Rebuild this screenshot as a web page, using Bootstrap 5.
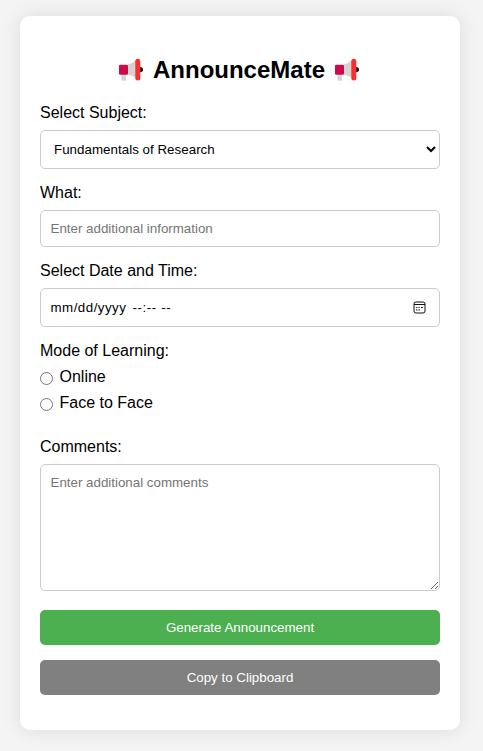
<!DOCTYPE html>
<html lang="en">
<head>
<meta charset="utf-8">
<meta name="viewport" content="width=device-width, initial-scale=1">
<title>AnnounceMate</title>
<link rel="stylesheet" href="https://cdn.jsdelivr.net/npm/bootstrap@5.3.0/dist/css/bootstrap.min.css">
<style>
body{min-height:100vh;padding:16px 0 0 20px;background:#f4f4f4;color:#000;font-family:"Liberation Sans",Arial,sans-serif;font-size:16px;line-height:18px}
.panel{width:440px;height:714px;padding:40px 20px 35px;border-radius:10px;box-shadow:0 0 20px rgba(0,0,0,.1)}
.title{font-size:24px;line-height:28px;height:28px;margin-bottom:20px;padding-right:2px;gap:10px}
.caption{display:block;height:18px;margin-bottom:8px}
.field{display:block;width:100%;height:39px;margin-bottom:15px;padding:0 10px 0 9.500px;border:1px solid #ccc;border-radius:5px;background:#fff;color:#000;font-size:13.333px;line-height:normal}
.field::placeholder{color:#757575}
select.field{padding:0 0 0 9px;letter-spacing:.03px}
.text-line{height:37px}
textarea.field{height:127px;padding:10px 10px 10px 9.500px;margin-bottom:19px;resize:vertical}
.date-line{padding-right:13px}
.date-part{letter-spacing:.48px;margin-right:6px}
.time-part{letter-spacing:.6px}
.mode-caption{margin-bottom:4px}
.choice{height:26px;gap:6.500px}
.choice input{width:13px;height:13px;margin:3px 0 0}
.modes{margin-bottom:22px}
.action{height:35px;padding:0;border:0;border-radius:5px;font-size:13.333px;color:#fff}
.action:hover{color:#fff}
.generate,.generate:hover{background:#4caf50;margin-bottom:15px}
.copy,.copy:hover{background:#808080}
</style>
</head>
<body>
<svg class="d-none">
  <symbol id="megaphone" viewBox="0 0 24 24"><path d="M20 9h1.500a2.600 2.600 0 0 1 0 5.200H20z" fill="#212121"/><path d="M2.500 15h4.500v6.700a1 1 0 0 1-1 1H3.500a1 1 0 0 1-1-1z" fill="#d3d3d3"/><path d="M8.500 6.800Q13 6 17 2.300v17.500Q13 17.400 8.500 16.600z" fill="#d3d3d3"/><rect y="6.700" width="9" height="10" rx="1.300" fill="#ca0b4a"/><rect x="16.300" y=".8" width="5" height="21.600" rx="2.500" fill="#f8312f"/></symbol>
</svg>
<main class="panel bg-white">
  <h1 class="title d-flex justify-content-center align-items-center fw-bold">
    <svg width="24" height="24" aria-hidden="true"><use href="#megaphone"/></svg>
    <span>AnnounceMate</span>
    <svg width="24" height="24" aria-hidden="true"><use href="#megaphone"/></svg>
  </h1>
  <form>
    <label class="caption" for="subject">Select Subject:</label>
    <select class="field" id="subject"><option>Fundamentals of Research</option></select>
    <label class="caption" for="what">What:</label>
    <input class="field text-line" id="what" type="text" placeholder="Enter additional information">
    <div class="caption">Select Date and Time:</div>
    <div class="field date-line d-flex align-items-center" tabindex="0">
      <span class="date-part">mm/dd/yyyy</span><span class="time-part">--:-- --</span>
      <svg class="ms-auto" width="13" height="13" viewBox="0 0 13 13" fill="none" stroke="#111" aria-hidden="true"><rect x="1" y="1" width="11" height="11" rx="2"/><path d="M1 3.500h11"/><path d="M3.200 6.500h1.200M5.500 6.500h1.200M8 6.500h1.800M3.200 8.800h1.200M5.500 8.800h1.200" stroke-width="1.200"/></svg>
    </div>
    <div class="caption mode-caption">Mode of Learning:</div>
    <div class="modes">
      <div class="choice d-flex align-items-center"><input type="radio" name="mode" id="online"><label for="online">Online</label></div>
      <div class="choice d-flex align-items-center"><input type="radio" name="mode" id="face"><label for="face">Face to Face</label></div>
    </div>
    <label class="caption" for="comments">Comments:</label>
    <textarea class="field" id="comments" placeholder="Enter additional comments"></textarea>
    <button type="button" class="btn action generate d-block w-100">Generate Announcement</button>
    <button type="button" class="btn action copy d-block w-100">Copy to Clipboard</button>
  </form>
</main>
<script src="https://cdn.jsdelivr.net/npm/bootstrap@5.3.0/dist/js/bootstrap.bundle.min.js"></script>
</body>
</html>
